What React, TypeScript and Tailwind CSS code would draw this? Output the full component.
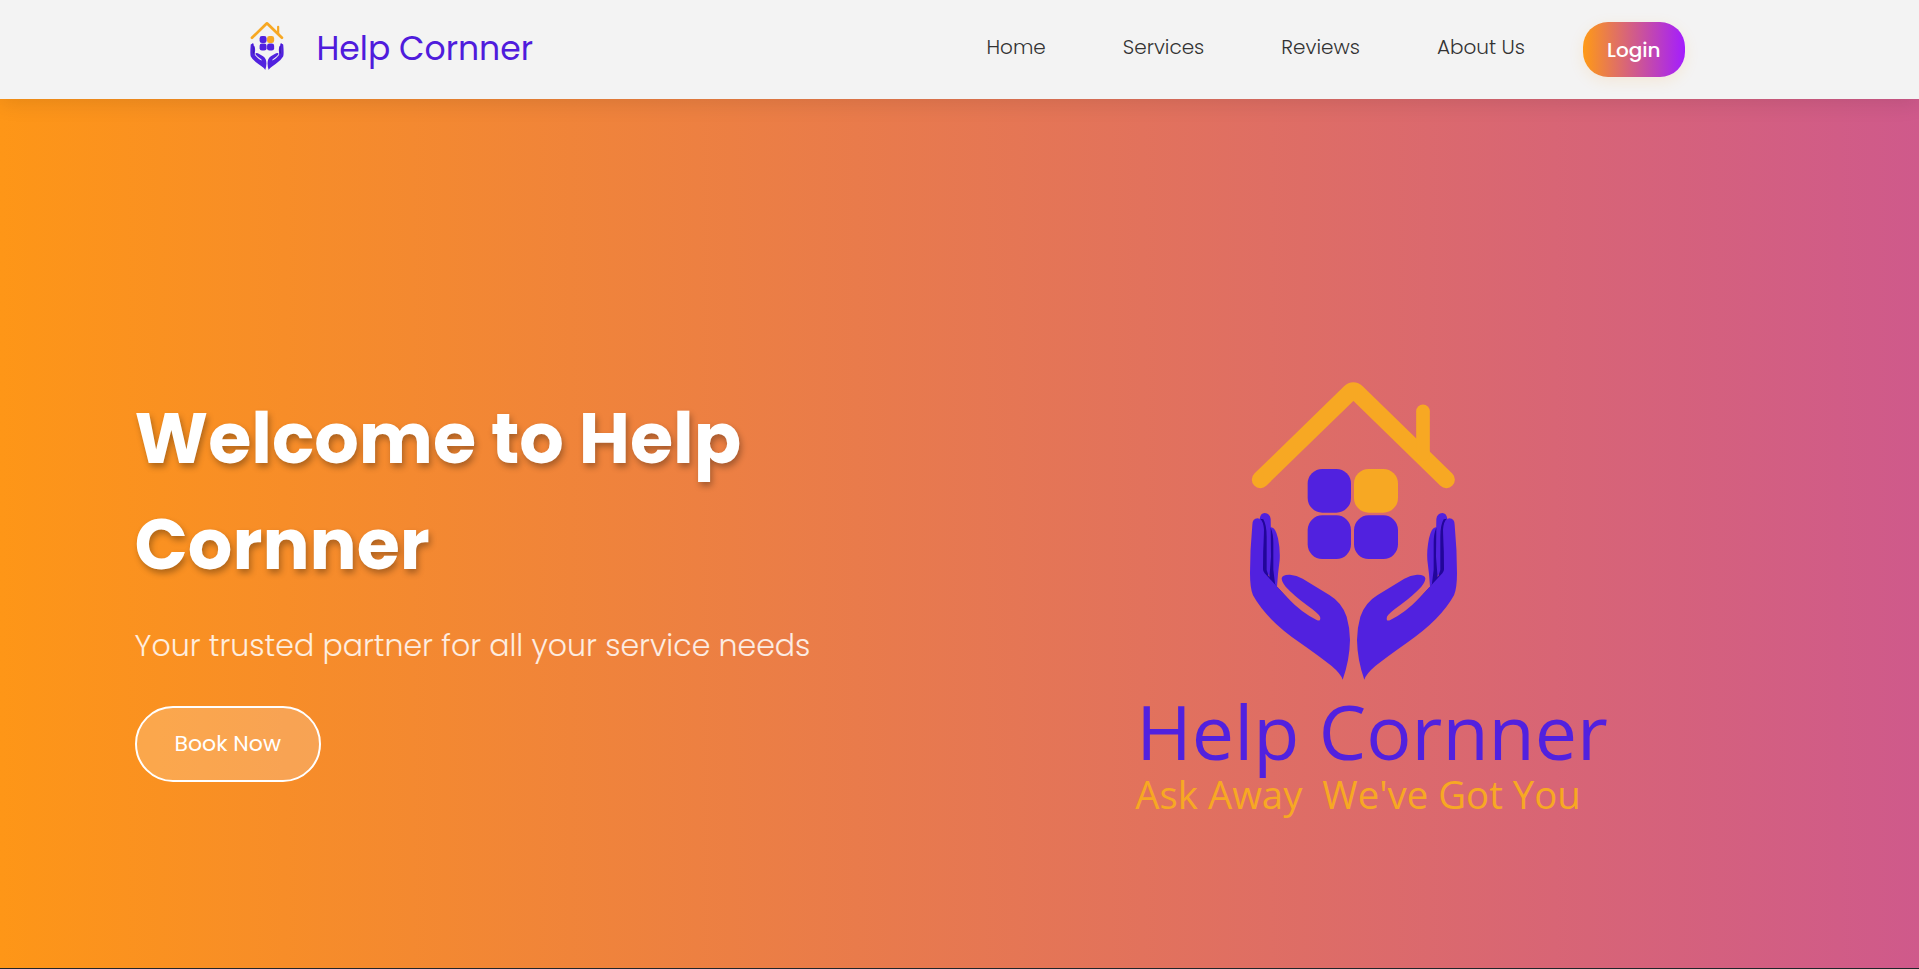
const NAV_LINKS = [
  { label: "Home", href: "#home" },
  { label: "Services", href: "#services" },
  { label: "Reviews", href: "#reviews" },
  { label: "About Us", href: "#about" },
];

function Hand() {
  return (
    <g>
      <path
        fill="#5121df"
        d="M452 472Q466 470 474 505Q481 540 479 570L474 612L471 650L448 625ZM419 447Q421 429 434 429Q450 430 452 447L454 560L455 622L434 605Z"
      />
      <path
        fill="#22069a"
        d="M420 446Q431 455 432 480L426 612L498 690L508 690L471 650L458 634L446 618L440 600V500Q440 465 430 448Z"
      />
      <path fill="#22069a" d="M452 473Q460 490 460 520L460 600L466 648L448 625L453 560Z" />
      <path
        fill="#5121df"
        d="M397 465Q397 445 413 445Q423 446 427 460Q431 475 430 500L429 598Q429 605 434 610L503 684Q545 728 590 750Q604 756 600 740Q594 729 560 705Q520 675 497 650Q485 636 485 625Q487 613 510 614Q530 615 548 626L628 675Q665 697 680 740Q690 775 690 810Q689 870 668 929Q663 912 635 888Q600 860 540 818Q440 750 399 676Q390 655 390 610Q390 540 397 465Z"
      />
    </g>
  );
}

function Mark() {
  return (
    <g>
      <path
        d="M421 329L690 67Q700 57 710 67L979 329"
        fill="none"
        stroke="#f7a823"
        strokeWidth="51"
        strokeLinecap="round"
        strokeLinejoin="round"
      />
      <path d="M909 124V252" stroke="#f7a823" strokeWidth="41" strokeLinecap="round" />
      <rect x="563" y="297" width="130" height="131" rx="44" fill="#5121df" />
      <rect x="702" y="297" width="132" height="131" rx="44" fill="#f7a823" />
      <rect x="563" y="436" width="130" height="131" rx="44" fill="#5121df" />
      <rect x="702" y="436" width="132" height="131" rx="44" fill="#5121df" />
      <Hand />
      <g transform="matrix(-1 0 0 1 1401 0)">
        <Hand />
      </g>
    </g>
  );
}

function Header() {
  return (
    <header className="relative z-10 bg-[#f3f3f3] shadow-[0_4px_20px_rgba(0,0,0,0.1)]">
      <div className="mx-auto flex h-[99px] max-w-[1450px] items-center justify-between pl-[14px]">
        <a href="#home" className="flex items-center gap-8 pb-2">
          <svg viewBox="388 35 626 895" className="h-12 w-9" aria-hidden="true">
            <Mark />
          </svg>
          <span className="pt-[6px] text-[33px] leading-10 text-[#4f1bdc]">Help Cornner</span>
        </a>
        <nav className="flex items-center">
          <ul className="mr-[58px] flex gap-[77px] pb-[6px]">
            {NAV_LINKS.map((link) => (
              <li key={link.label}>
                <a href={link.href} className="text-[20px] leading-8 font-light text-[#333333]">
                  {link.label}
                </a>
              </li>
            ))}
          </ul>
          <button
            type="button"
            className="h-[55px] rounded-[25px] bg-linear-to-r/srgb from-[#ff9a15] to-[#a31dff] px-6 text-[20px] font-medium text-white shadow-[0_4px_15px_rgba(255,154,21,0.12)]"
          >
            Login
          </button>
        </nav>
      </div>
    </header>
  );
}

function Hero() {
  return (
    <main
      id="home"
      className="flex flex-1 items-center bg-linear-to-r/srgb from-[#fe9617] to-[#a01dff] bg-[length:200%_100%] pt-[100px]"
    >
      <div className="mx-auto grid w-full max-w-[1650px] grid-cols-2 items-center">
        <div className="flex flex-col items-start">
          <h1 className="max-w-[660px] text-[70px] leading-[106px] font-bold text-white [text-shadow:2px_4px_6px_rgba(0,0,0,0.3)]">
            Welcome to Help Cornner
          </h1>
          <p className="mt-6 text-[30px] leading-[48px] font-light text-white/85">
            Your trusted partner for all your service needs
          </p>
          <a
            href="#services"
            className="mt-9 flex h-[76px] items-center rounded-[38px] border-2 border-white bg-white/20 px-[38px] text-[22px] text-white"
          >
            Book Now
          </a>
        </div>
        <svg
          viewBox="6 -108 1500 1500"
          className="w-full max-w-[500px] justify-self-center"
          role="img"
          aria-label="Help Cornner"
        >
          <Mark />
          <text x="49" y="1169" fontSize="226" fill="#5121df" className="font-['Open_Sans','Noto_Sans',sans-serif]">
            Help Cornner
          </text>
          <text
            x="46"
            y="1317"
            fontSize="115"
            fill="#f7a823"
            className="font-['Open_Sans','Noto_Sans',sans-serif] whitespace-pre"
          >
            {"Ask Away  We've Got You"}
          </text>
        </svg>
      </div>
    </main>
  );
}

export default function App() {
  return (
    <div className="flex min-h-screen flex-col font-['Poppins','Inter',sans-serif]">
      <Header />
      <Hero />
      <footer className="h-px bg-[#212529]" />
    </div>
  );
}
